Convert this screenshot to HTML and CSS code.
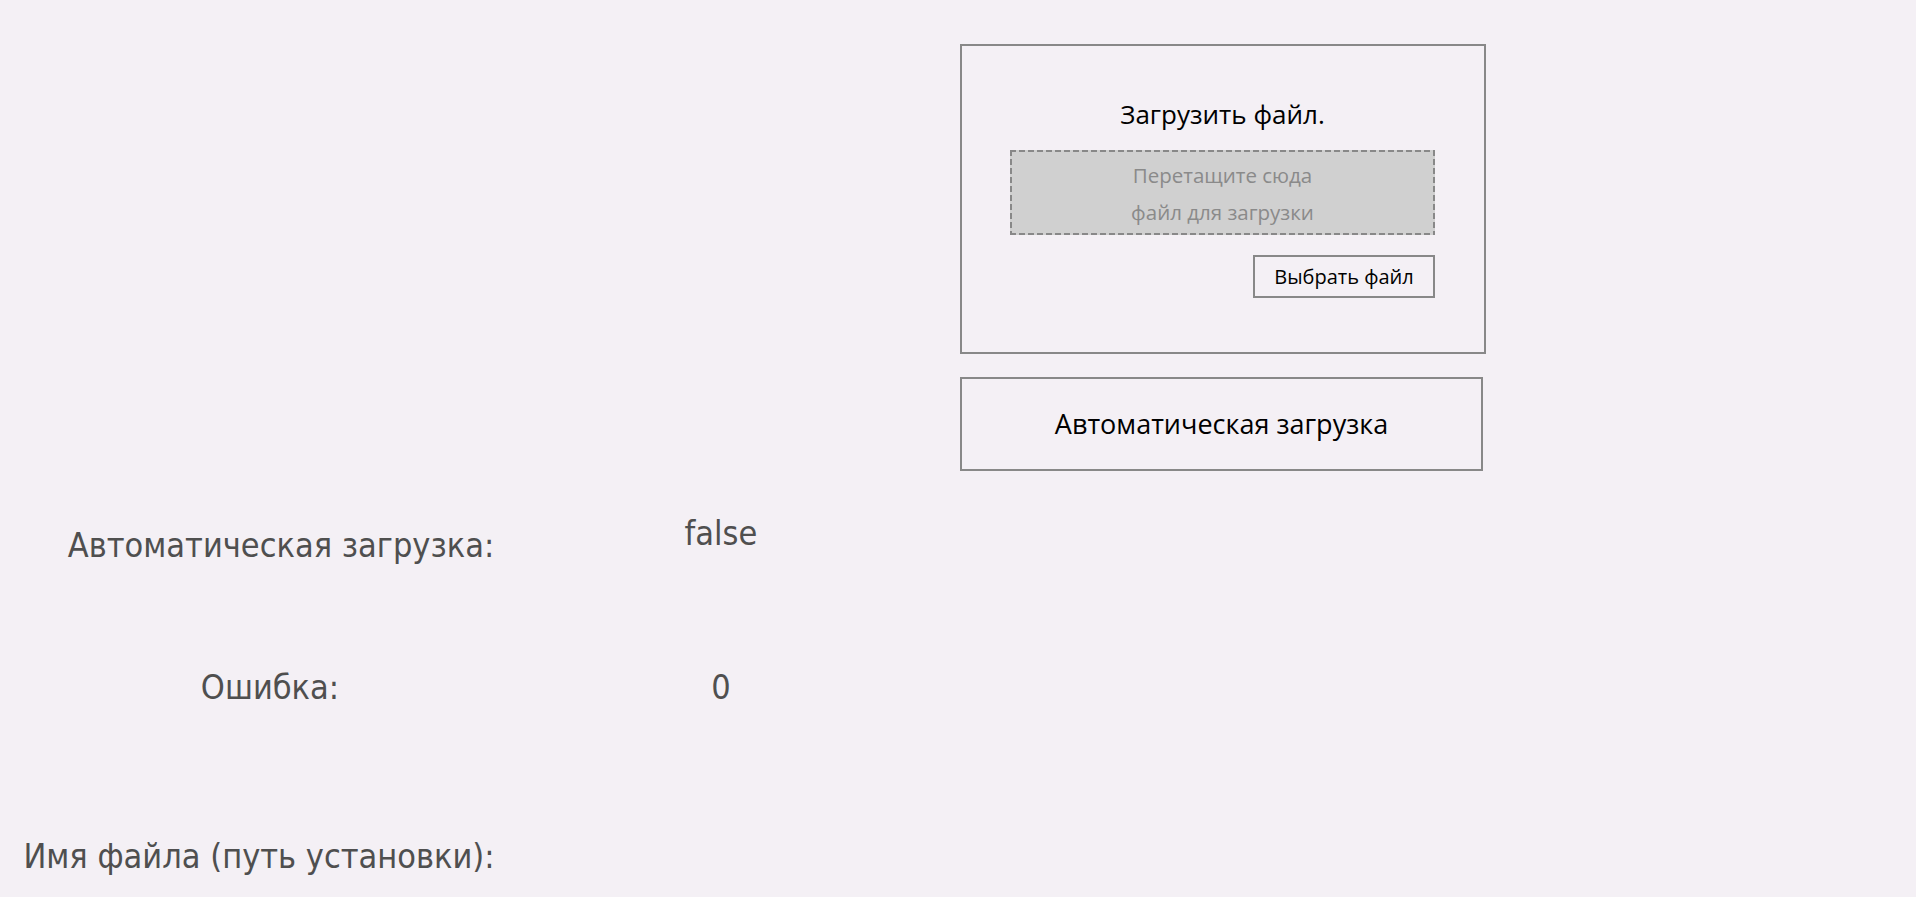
FILE: index.html
```html
<!DOCTYPE html>
<html lang="ru">
<head>
<meta charset="utf-8">
<title>Загрузка файла</title>
<link rel="stylesheet" href="styles.css">
</head>
<body>
<main class="page">
  <section class="upload-col">
    <div class="upload-card">
      <div class="upload-title">Загрузить файл.</div>
      <div class="drop-zone">
        <span class="drop-line">Перетащите сюда</span>
        <span class="drop-line">файл для загрузки</span>
      </div>
      <div class="pick-row">
        <button class="pick-btn" type="button">Выбрать файл</button>
      </div>
    </div>
    <button class="auto-btn" type="button">Автоматическая загрузка</button>
  </section>

  <section class="status">
    <div class="status-label status-label--auto">Автоматическая загрузка:</div>
    <div class="status-value status-value--raised">false</div>
    <div class="status-label">Ошибка:</div>
    <div class="status-value">0</div>
    <div class="status-label status-label--path">Имя файла (путь установки):</div>
    <div class="status-value"></div>
  </section>
</main>
</body>
</html>
```

FILE: styles.css
```css
html, body {
  margin: 0;
  padding: 0;
  background: #f4f0f5;
}

.page {
  min-height: 897px;
}

.upload-col {
  margin-left: calc(50% + 2px);
  padding-top: 44px;
  width: 526px;
  display: flex;
  flex-direction: column;
  font-family: "Open Sans", "Noto Sans", sans-serif;
  color: #000;
}

.upload-card {
  box-sizing: border-box;
  height: 310px;
  border: 2px solid #888;
  padding: 50px 49px 0 48px;
  display: flex;
  flex-direction: column;
}

.upload-title {
  font-size: 26px;
  line-height: 36px;
  text-align: center;
  margin-bottom: 18px;
}

.drop-zone {
  box-sizing: border-box;
  height: 85px;
  padding: 7px 2px 0;
  display: flex;
  flex-direction: column;
  align-items: center;
  color: #8a8a8a;
  font-size: 20.5px;
  line-height: 37px;
  background:
    repeating-linear-gradient(90deg, #888 0 6px, transparent 6px 9px) top left / 100% 2px no-repeat,
    repeating-linear-gradient(90deg, #888 0 6px, transparent 6px 9px) bottom left / 100% 2px no-repeat,
    repeating-linear-gradient(180deg, #888 0 6px, transparent 6px 9px) top left / 2px 100% no-repeat,
    repeating-linear-gradient(180deg, #888 0 6px, transparent 6px 9px) top right / 2px 100% no-repeat,
    #d0d0d0;
}

.pick-row {
  display: flex;
  justify-content: flex-end;
  margin-top: 20px;
}

.pick-btn {
  box-sizing: border-box;
  width: 182px;
  height: 43px;
  margin: 0;
  padding: 0;
  border: 2px solid #888;
  background: transparent;
  font-family: "Open Sans", "Noto Sans", sans-serif;
  font-size: 20px;
  line-height: 39px;
  color: #000;
}

.auto-btn {
  box-sizing: border-box;
  width: 523px;
  height: 94px;
  margin: 23px 0 0;
  padding: 0 0 2px;
  border: 2px solid #888;
  background: transparent;
  font-family: "Open Sans", "Noto Sans", sans-serif;
  font-size: 27px;
  color: #000;
}

.status {
  display: grid;
  grid-template-columns: 540px 362px;
  grid-template-rows: 142px 169px 42px;
  margin-top: 53px;
  font-family: "DejaVu Sans Condensed", "DejaVu Sans", sans-serif;
  font-stretch: condensed;
  font-size: 34px;
  line-height: 42px;
  color: #4f4f4f;
}

.status-label,
.status-value {
  text-align: center;
  white-space: nowrap;
}

.status-label--auto {
  padding-left: 22px;
}

.status-label--path {
  padding-right: 22px;
}

.status-value--raised {
  margin-top: -12px;
}
```
